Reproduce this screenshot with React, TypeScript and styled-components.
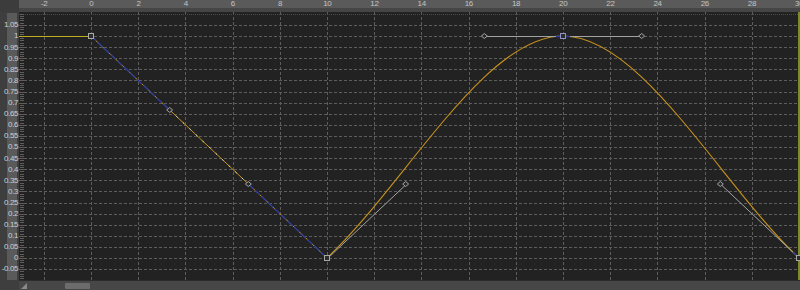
import styled, { createGlobalStyle } from "styled-components";

const GlobalStyle = createGlobalStyle`
  html, body {
    margin: 0;
    padding: 0;
    background: #3c3c3c;
  }
`;

// scale: time units -> px, value -> px (page coordinates)
const X0 = 91;
const XU = 23.6;
const Y0 = 258;
const YU = 222;
const px = (t: number) => X0 + XU * t;
const py = (v: number) => Y0 - YU * v;

const Window = styled.div`
  width: 800px;
  height: 290px;
  display: grid;
  grid-template-columns: 19px 1fr;
  grid-template-rows: 12px 268px 10px;
  background: #3c3c3c;
  overflow: hidden;
  font-family: "Liberation Sans", Arial, sans-serif;
`;

const Corner = styled.div`
  background: #3c3c3c;
`;

const TopRuler = styled.div`
  display: flex;
  padding-left: 1.6px;
  background: #5a5a5a;
  border-bottom: 4px solid #454545;
  overflow: hidden;
`;

const TopLabel = styled.span`
  flex: 0 0 47.2px;
  text-align: center;
  font-size: 8px;
  line-height: 8px;
  letter-spacing: -0.3px;
  color: #c4c4c4;
`;

const LeftRuler = styled.div`
  display: flex;
  background: #3e3e3e;
  overflow: hidden;
`;

const LabelColumn = styled.div`
  margin: 1px 2px 0 7px;
  width: 10px;
  display: flex;
  flex-direction: column;
  align-items: flex-end;
  padding-top: 6.35px;
  background: #5a5a5a;
`;

const LeftLabel = styled.span`
  flex: 0 0 11.1px;
  display: flex;
  align-items: center;
  white-space: nowrap;
  margin-right: -1px;
  font-size: 8px;
  letter-spacing: -0.4px;
  color: #cfcfcf;
`;

const Plot = styled.svg`
  display: block;
  width: 781px;
  height: 268px;
  background: #222222;
`;

const BottomCorner = styled.div`
  background: #3e3e3e;
`;

const Scrollbar = styled.div`
  display: flex;
  align-items: center;
  gap: 38px;
  padding-left: 2px;
  background: #474747;
  border-top: 1px solid #2c2c2c;
`;

const Grip = styled.svg`
  display: block;
  width: 6px;
  height: 6px;
`;

const Thumb = styled.div`
  width: 25px;
  height: 6px;
  border-radius: 1px;
  background: #6c6c6c;
`;

const times = Array.from({ length: 17 }, (_, i) => -2 + i * 2);
const values = Array.from({ length: 24 }, (_, i) => Number((1.1 - i * 0.05).toFixed(2)));
const labelValues = values.slice(1);

const GRID = "#5d5d5d";
const CURVE = "#c8921c";
const PRE = "#bfae1e";
const BLUE = "#2c3c96";
const HANDLE = "#a2a2a2";

const snap = (n: number) => Math.round(n) + 0.5;

function Diamond({ x, y }: { x: number; y: number }) {
  return (
    <polygon
      points={`${x - 3},${y} ${x},${y - 2.5} ${x + 3},${y} ${x},${y + 2.5}`}
      fill="#2a2a2a"
      stroke={HANDLE}
      strokeWidth={1}
    />
  );
}

function Key({ x, y, selected }: { x: number; y: number; selected?: boolean }) {
  const cx = Math.round(x);
  const cy = Math.round(y);
  return (
    <rect
      x={cx - 2.5}
      y={cy - 2.5}
      width={5}
      height={5}
      fill="#2c2c2c"
      stroke={selected ? "#9090c4" : "#a8a8a8"}
      strokeWidth={1}
    />
  );
}

function CurvePlot() {
  const k0 = { x: px(0), y: py(1) };
  const k10 = { x: px(10), y: py(0) };
  const k20 = { x: px(20), y: py(1) };
  const k30 = { x: px(30), y: py(0) };
  const third = (XU * 10) / 3;
  const h0 = { x: k0.x + third, y: py(1 - 1 / 3) };
  const h10in = { x: k10.x - third, y: py(1 / 3) };
  const h10out = { x: k10.x + third, y: py(1 / 3) };
  const h20in = { x: k20.x - third, y: k20.y };
  const h20out = { x: k20.x + third, y: k20.y };
  const h30in = { x: k30.x - third, y: py(1 / 3) };

  const ticks = [];
  for (let v = 1.1; v >= -0.1; v -= 0.01) {
    ticks.push(py(v));
  }

  return (
    <Plot viewBox="19 12 781 268">
      {/* grid */}
      {times.map((t) => (
        <line key={"v" + t} x1={snap(px(t))} y1={12} x2={snap(px(t))} y2={280} stroke={GRID} strokeDasharray="3 2" />
      ))}
      {values.map((v, i) => (
        <line
          key={"h" + v}
          x1={19}
          y1={snap(py(v))}
          x2={800}
          y2={snap(py(v))}
          stroke={i === 0 ? "#4a4a4a" : GRID}
          strokeDasharray={i === 0 ? "1 1" : "3 2"}
        />
      ))}
      {ticks.map((y, i) => (
        <line key={"t" + i} x1={20} y1={snap(y)} x2={24} y2={snap(y)} stroke="#5e5e5e" />
      ))}

      {/* end marker */}
      <line x1={799} y1={12} x2={799} y2={280} stroke="#7d8a28" strokeWidth={2} />

      {/* pre-infinity */}
      <line x1={19} y1={snap(k0.y)} x2={k0.x} y2={snap(k0.y)} stroke={PRE} />

      {/* linear segment 0 -> 10 */}
      <line x1={k0.x} y1={k0.y} x2={k10.x} y2={k10.y} stroke={CURVE} />
      <line x1={k0.x} y1={k0.y} x2={h0.x} y2={h0.y} stroke={BLUE} strokeWidth={1.4} strokeDasharray="7 2" />
      <line x1={h10in.x} y1={h10in.y} x2={k10.x} y2={k10.y} stroke={BLUE} strokeWidth={1.4} strokeDasharray="7 2" />
      <line x1={h0.x} y1={h0.y} x2={h10in.x} y2={h10in.y} stroke="#d8d8c0" strokeDasharray="2 7" />

      {/* eased segments */}
      <path
        d={`M${k10.x},${k10.y} C${h10out.x},${h10out.y} ${h20in.x},${h20in.y} ${k20.x},${k20.y} C${h20out.x},${h20out.y} ${h30in.x},${h30in.y} ${k30.x},${k30.y}`}
        fill="none"
        stroke={CURVE}
        strokeWidth={1.1}
      />

      {/* handles */}
      <line x1={k10.x + 1} y1={k10.y} x2={h10out.x + 1} y2={h10out.y} stroke={HANDLE} />
      <line x1={h20in.x} y1={snap(h20in.y)} x2={h20out.x} y2={snap(h20out.y)} stroke={HANDLE} />
      <line x1={k20.x - 7} y1={snap(k20.y)} x2={k20.x + 7} y2={snap(k20.y)} stroke={BLUE} strokeWidth={1.5} />
      <line x1={h30in.x} y1={h30in.y} x2={k30.x - 1} y2={k30.y - 1} stroke={HANDLE} />
      <line x1={k30.x - 6} y1={k30.y - 6} x2={k30.x} y2={k30.y} stroke={BLUE} strokeWidth={1.4} />

      <Diamond x={h0.x} y={h0.y} />
      <Diamond x={h10in.x} y={h10in.y} />
      <Diamond x={h10out.x} y={h10out.y} />
      <Diamond x={h20in.x} y={h20in.y} />
      <Diamond x={h20out.x} y={h20out.y} />
      <Diamond x={h30in.x} y={h30in.y} />

      <Key x={k0.x} y={k0.y} />
      <Key x={k10.x} y={k10.y} />
      <Key x={k20.x} y={k20.y} selected />
      <Key x={k30.x} y={k30.y} />
    </Plot>
  );
}

export default function App() {
  return (
    <>
      <GlobalStyle />
      <Window>
        <Corner />
        <TopRuler>
          {times.map((t) => (
            <TopLabel key={t}>{t}</TopLabel>
          ))}
        </TopRuler>
        <LeftRuler>
          <LabelColumn>
            {labelValues.map((v) => (
              <LeftLabel key={v}>{String(v)}</LeftLabel>
            ))}
          </LabelColumn>
        </LeftRuler>
        <CurvePlot />
        <BottomCorner />
        <Scrollbar>
          <Grip viewBox="0 0 6 6">
            <polygon points="0,6 6,0 6,6" fill="#8a8a8a" />
          </Grip>
          <Thumb />
        </Scrollbar>
      </Window>
    </>
  );
}
